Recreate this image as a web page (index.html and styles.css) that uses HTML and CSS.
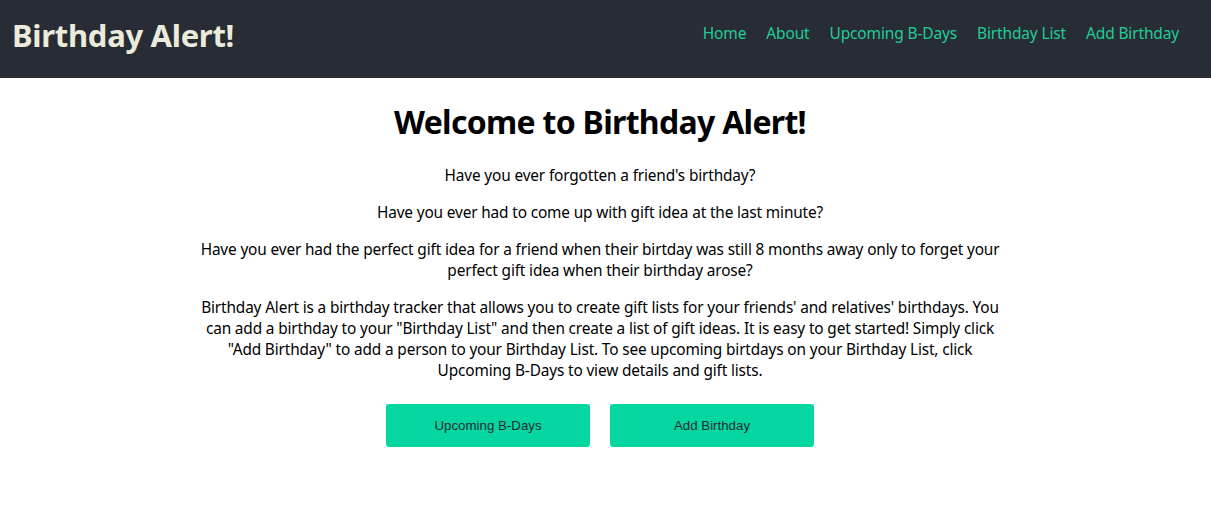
FILE: index.html
```html
<!DOCTYPE html>
<html lang="en">
<head>
<meta charset="utf-8">
<title>Birthday Alert!</title>
<link rel="stylesheet" href="styles.css">
</head>
<body>
<header class="topbar">
  <div class="brand">Birthday Alert!</div>
  <nav class="nav">
    <a href="#">Home</a>
    <a href="#">About</a>
    <a href="#">Upcoming B-Days</a>
    <a href="#">Birthday List</a>
    <a href="#">Add Birthday</a>
  </nav>
</header>
<div class="page">
  <main class="home">
    <h1 class="title">Welcome to Birthday Alert!</h1>
    <p>Have you ever forgotten a friend's birthday?</p>
    <p>Have you ever had to come up with gift idea at the last minute?</p>
    <p>Have you ever had the perfect gift idea for a friend when their birtday was still 8 months away only to forget your perfect gift idea when their birthday arose?</p>
    <p>Birthday Alert is a birthday tracker that allows you to create gift lists for your friends' and relatives' birthdays. You can add a birthday to your "Birthday List" and then create a list of gift ideas. It is easy to get started! Simply click "Add Birthday" to add a person to your Birthday List. To see upcoming birtdays on your Birthday List, click Upcoming B-Days to view details and gift lists.</p>
    <div class="actions">
      <button class="btn">Upcoming B-Days</button>
      <button class="btn">Add Birthday</button>
    </div>
  </main>
</div>
</body>
</html>
```

FILE: styles.css
```css
html, body {
  margin: 0;
  padding: 0;
  background: #ffffff;
}
body {
  font-family: "Noto Sans", "Open Sans", sans-serif;
  color: #000;
}
.topbar {
  height: 78px;
  background: #282c34;
  display: flex;
  align-items: center;
  justify-content: space-between;
  padding: 0 32px 0 12px;
  box-sizing: border-box;
}
.brand {
  color: #ebebdc;
  font-size: 31px;
  font-weight: 700;
  letter-spacing: -0.3px;
  margin-top: -8px;
}
.nav {
  display: flex;
  gap: 20px;
  margin-top: -13px;
}
.nav a {
  color: #1fcc94;
  text-decoration: none;
  font-size: 15.5px;
  letter-spacing: -0.15px;
}
.page {
  padding-right: 11px;
}
.home {
  max-width: 806px;
  margin: 0 auto;
  text-align: center;
}
.title {
  font-size: 32px;
  font-weight: 700;
  line-height: 43px;
  margin: 22px 0 22px;
  letter-spacing: -0.7px;
}
.home p {
  font-size: 15.4px;
  line-height: 21px;
  margin: 16px 0;
  letter-spacing: -0.15px;
}
.actions {
  display: flex;
  justify-content: center;
  gap: 20px;
  margin-top: 23px;
}
.btn {
  width: 204px;
  height: 43px;
  border: none;
  border-radius: 3px;
  background: #06d6a0;
  color: #282c34;
  font-family: "Liberation Sans", Arial, sans-serif;
  font-size: 13.3px;
}
```
